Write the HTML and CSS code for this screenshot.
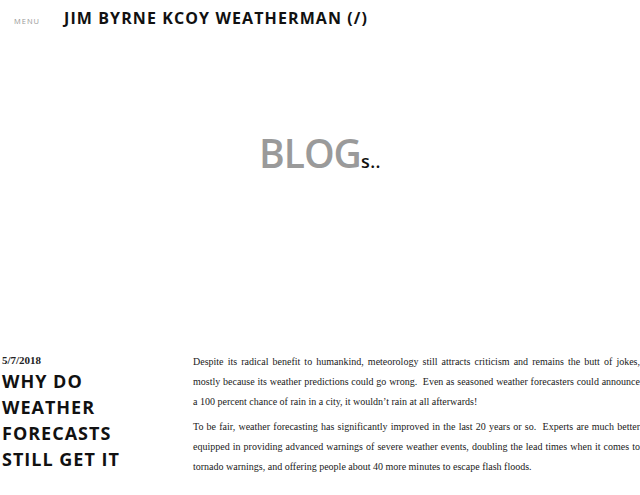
FILE: index.html
```html
<!DOCTYPE html>
<html>
<head>
<meta charset="utf-8">
<link rel="stylesheet" href="styles.css">
</head>
<body>
<header class="top">
  <span class="menu">MENU</span>
  <span class="site">JIM BYRNE KCOY WEATHERMAN (/)</span>
</header>
<section class="hero">
  <h1 class="blog">BLOG<span class="s">s..</span></h1>
</section>
<section class="post">
  <div class="side">
    <div class="date">5/7/2018</div>
    <h2 class="ptitle">WHY DO WEATHER FORECASTS STILL GET IT</h2>
  </div>
  <div class="body">
    <p>Despite its radical benefit to humankind, meteorology still attracts criticism and remains the butt of jokes, mostly because its weather predictions could go wrong.&nbsp; Even as seasoned weather forecasters could announce a 100 percent chance of rain in a city, it wouldn’t rain at all afterwards!</p>
    <p>To be fair, weather forecasting has significantly improved in the last 20 years or so.&nbsp; Experts are much better equipped in providing advanced warnings of severe weather events, doubling the lead times when it comes to tornado warnings, and offering people about 40 more minutes to escape flash floods.</p>
  </div>
</section>
</body>
</html>
```
FILE: styles.css
```css
html, body { margin: 0; padding: 0; background: #fff; }
body { width: 640px; height: 495px; overflow: hidden; }
.top { display: flex; align-items: baseline; padding: 7px 0 0 14px; height: 30px; box-sizing: border-box; }
.menu { font-family: "Open Sans", sans-serif; font-size: 7.5px; letter-spacing: 1px; color: #999; width: 50px; }
.site { font-family: "Open Sans", sans-serif; font-weight: 700; font-size: 16px; letter-spacing: 1.1px; color: #111; }
.hero { height: 318px; display: flex; justify-content: center; align-items: flex-start; }
.blog { margin: 103px 0 0 0; font-family: "Open Sans", sans-serif; font-weight: 600; font-size: 39px; color: #9a9a9a; line-height: 1; letter-spacing: -1px; }
.blog .s { color: #111; font-size: 18px; letter-spacing: 0.5px; }
.post { display: flex; }
.side { width: 193px; flex: none; padding-left: 2px; box-sizing: border-box; }
.date { font-family: "Liberation Serif", serif; font-weight: 700; font-size: 11px; margin-top: 6px; color: #222; }
.ptitle { margin: 2px 0 0 0; max-width: 140px; font-family: "Open Sans", sans-serif; font-weight: 700; font-size: 18px; line-height: 26px; letter-spacing: 1px; color: #111; }
.body { flex: 1; padding-top: 4px; font-family: "Liberation Serif", serif; font-size: 10px; line-height: 20px; color: #1a1a1a; }
.body p { margin: 0 0 5px 0; text-align: justify; }
```
